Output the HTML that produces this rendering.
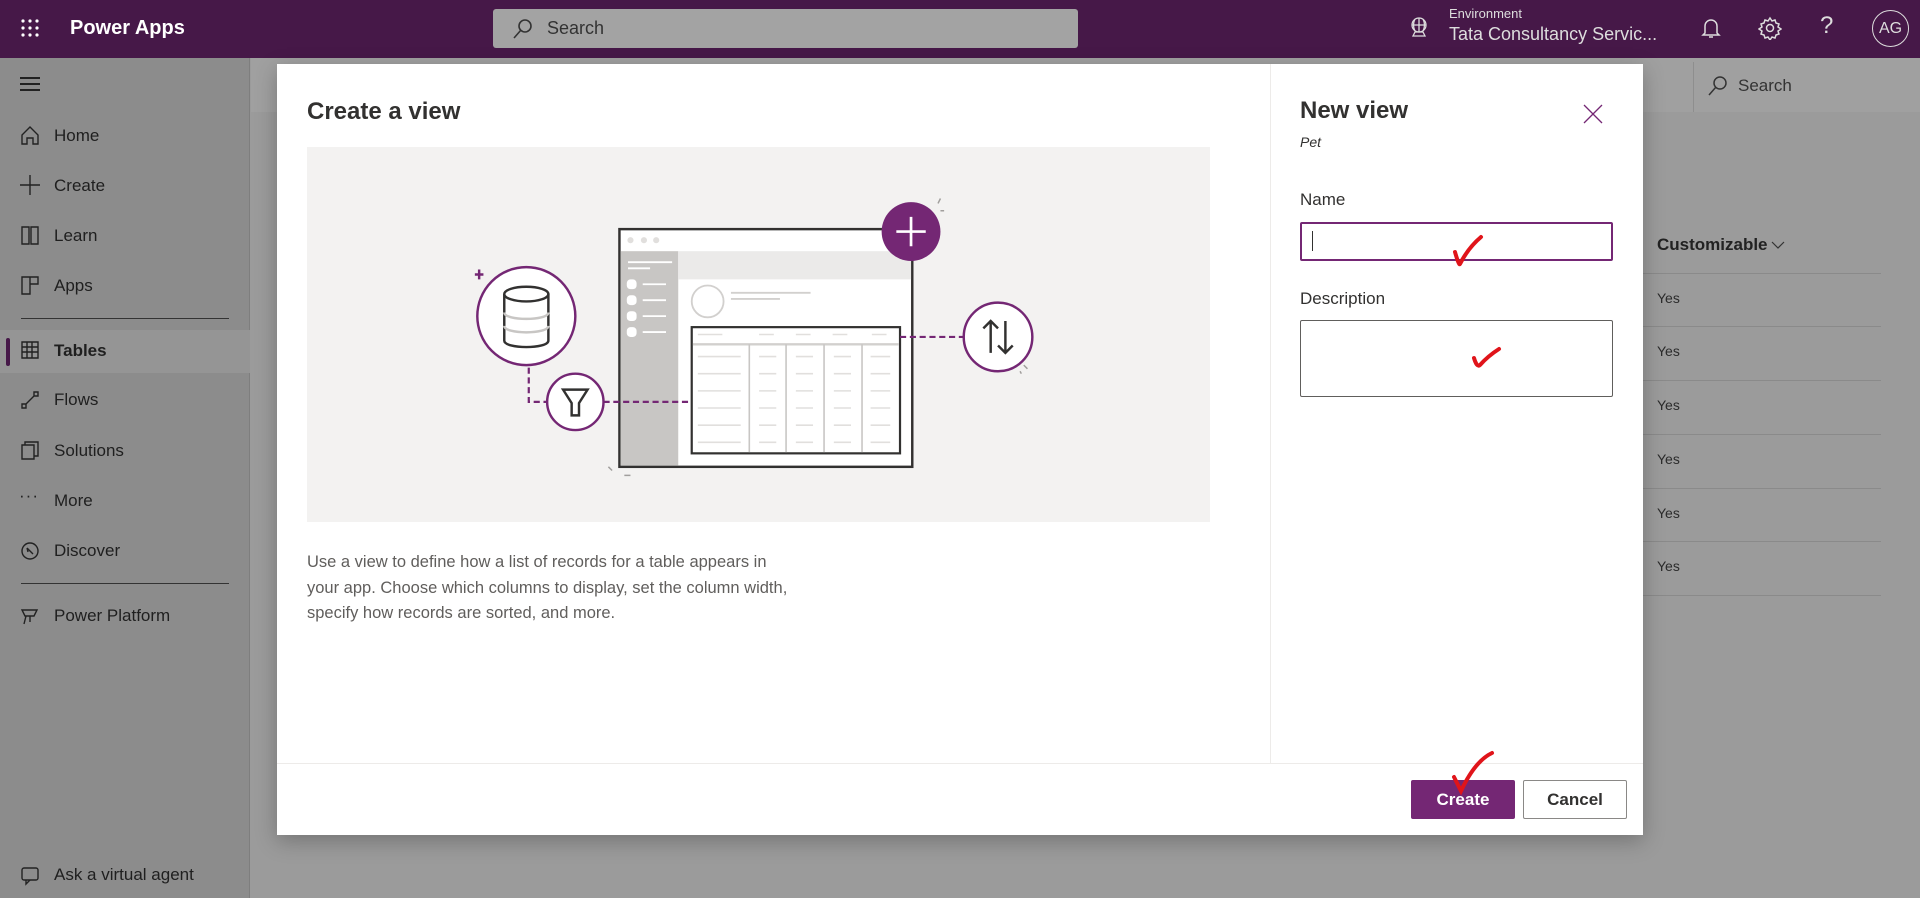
<!DOCTYPE html>
<html><head><meta charset="utf-8"><style>
*{margin:0;padding:0;box-sizing:border-box}
body{width:1920px;height:898px;overflow:hidden;font-family:"Liberation Sans",sans-serif;background:#9b9b9b;position:relative}
.abs{position:absolute}
.top{left:0;top:0;width:1920px;height:58px;background:#461848;color:#fff}
.side{left:0;top:58px;width:250px;height:840px;background:#8c8c8c;border-right:1px solid #7e7e7e}
.nav{position:absolute;left:54px;font-size:17px;color:#1f1f1f}
.ic{position:absolute;left:20px}
.yes{position:absolute;left:1657px;font-size:14px;color:#2b2b2b}
.rl{position:absolute;left:1643px;width:238px;height:1px;background:#8a8a8a}
</style></head><body>
<div class="abs top">
 <svg class="abs" style="left:20px;top:18px" width="20" height="20" viewBox="0 0 20 20" fill="#fff"><circle cx="3" cy="3" r="1.6"/><circle cx="10" cy="3" r="1.6"/><circle cx="17" cy="3" r="1.6"/><circle cx="3" cy="10" r="1.6"/><circle cx="10" cy="10" r="1.6"/><circle cx="17" cy="10" r="1.6"/><circle cx="3" cy="17" r="1.6"/><circle cx="10" cy="17" r="1.6"/><circle cx="17" cy="17" r="1.6"/></svg>
 <div class="abs" style="left:70px;top:17px;font-size:20px;font-weight:bold">Power Apps</div>
 <div class="abs" style="left:493px;top:9px;width:585px;height:39px;background:#a3a3a3;border-radius:3px"></div>
 <svg class="abs" style="left:512px;top:18px" width="22" height="22" viewBox="0 0 22 22" fill="none" stroke="#333" stroke-width="1.6"><circle cx="13" cy="8" r="6"/><path d="M9 12 L2 20"/></svg>
 <div class="abs" style="left:547px;top:18px;font-size:18px;color:#333">Search</div>
 <svg class="abs" style="left:1408px;top:16px" width="22" height="22" viewBox="0 0 22 22" fill="none" stroke="#ddd" stroke-width="1.3"><circle cx="11" cy="9" r="7"/><path d="M4 9h14M11 2v14M7 3c-2 4-2 8 0 12M15 3c2 4 2 8 0 12M5 20h12l-2-4H7z"/></svg>
 <div class="abs" style="left:1449px;top:6px;font-size:13px;color:#ddd">Environment</div>
 <div class="abs" style="left:1449px;top:24px;font-size:18px;color:#ddd">Tata Consultancy Servic...</div>
 <svg class="abs" style="left:1700px;top:16px" width="22" height="24" viewBox="0 0 22 24" fill="none" stroke="#ddd" stroke-width="1.5"><path d="M5 17V10a6 6 0 0 1 12 0v7l2 2H3z M9 21h4"/></svg>
 <svg class="abs" style="left:1758px;top:16px" width="24" height="24" viewBox="0 0 24 24" fill="none" stroke="#ddd" stroke-width="1.5"><circle cx="12" cy="12" r="3.5"/><path d="M12 2l2 3 3-1 1 3 3 1-1 3 3 2-3 2 1 3-3 1-1 3-3-1-2 3-2-3-3 1-1-3-3-1 1-3-3-2 3-2-1-3 3-1 1-3 3 1z"/></svg>
 <div class="abs" style="left:1820px;top:12px;font-size:24px;color:#ddd">?</div>
 <div class="abs" style="left:1872px;top:10px;width:37px;height:37px;border:1px solid #ddd;border-radius:50%;font-size:16px;color:#ddd;text-align:center;line-height:35px">AG</div>
</div>
<div class="abs side">
 <div class="abs" style="left:20px;top:19px;width:20px;height:2px;background:#222;box-shadow:0 6px 0 #222,0 12px 0 #222"></div>
 <div class="abs" style="left:21px;top:260px;width:208px;height:1px;background:#333"></div>
 <div class="abs" style="left:0;top:272px;width:250px;height:43px;background:#959595"></div>
 <div class="abs" style="left:6px;top:280px;width:4px;height:28px;background:#461848;border-radius:2px"></div>
 <div class="nav" style="top:68px">Home</div>
 <div class="nav" style="top:118px">Create</div>
 <div class="nav" style="top:168px">Learn</div>
 <div class="nav" style="top:218px">Apps</div>
 <div class="nav" style="top:283px;font-weight:bold">Tables</div>
 <div class="nav" style="top:332px">Flows</div>
 <div class="nav" style="top:383px">Solutions</div>
 <div class="nav" style="top:433px">More</div>
 <div class="nav" style="top:483px">Discover</div>
 <div class="abs" style="left:21px;top:525px;width:208px;height:1px;background:#333"></div>
 <div class="nav" style="top:548px">Power Platform</div>
 <div class="nav" style="top:807px">Ask a virtual agent</div>
 <svg class="ic" style="top:67px" width="22" height="22" fill="none" stroke="#222" stroke-width="1.4"><path d="M2 10 L10 2 L18 10 V19 H13 V13 H7 V19 H2Z"/></svg>
 <svg class="ic" style="top:117px" width="22" height="22" fill="none" stroke="#222" stroke-width="1.4"><path d="M10 0 V20 M0 10 H20"/></svg>
 <svg class="ic" style="top:167px" width="22" height="22" fill="none" stroke="#222" stroke-width="1.4"><path d="M2 2 h7 v17 h-7z M11 2 h7 v17 h-7z"/></svg>
 <svg class="ic" style="top:217px" width="22" height="22" fill="none" stroke="#222" stroke-width="1.4"><path d="M2 2 h16 v7 h-8 v10 h-8z M10 2 v7"/></svg>
 <svg class="ic" style="top:282px" width="22" height="22" fill="none" stroke="#222" stroke-width="1.4"><path d="M2 2 h16 v16 h-16z M2 7h16M2 12h16M7 2v16M12 2v16"/></svg>
 <svg class="ic" style="top:331px" width="22" height="22" fill="none" stroke="#222" stroke-width="1.4"><path d="M2 19 h4 v-4 h-4z M6 15 L14 7 M14 3 h4 v4 h-4z"/></svg>
 <svg class="ic" style="top:381px" width="22" height="22" fill="none" stroke="#222" stroke-width="1.4"><path d="M2 6 h12 v14 h-12z M5 6 v-3 h13 v14 h-4"/></svg>
 <div class="abs" style="left:19px;top:428px;font-size:17px;color:#222;letter-spacing:1px">···</div>
 <svg class="ic" style="top:483px" width="22" height="22" fill="none" stroke="#222" stroke-width="1.4"><circle cx="10" cy="10" r="8"/><path d="M7 7 l6 6 M7 7 l1 4"/></svg>
 <svg class="ic" style="top:548px" width="22" height="22" fill="none" stroke="#222" stroke-width="1.4"><path d="M2 4 h15 l-3 6 h-9z M6 10 l-2 8 M10 10 v6"/></svg>
 <svg class="ic" style="top:807px" width="22" height="22" fill="none" stroke="#222" stroke-width="1.4"><rect x="2" y="3" width="16" height="12" rx="2"/><path d="M6 15 v4 l4 -4"/></svg>
</div>
<div class="abs" style="left:251px;top:58px;width:1669px;height:54px;background:#a0a0a0"></div>
<div class="abs" style="left:1693px;top:62px;width:1px;height:50px;background:#8e8e8e"></div>
<svg class="abs" style="left:1707px;top:75px" width="22" height="22" fill="none" stroke="#333" stroke-width="1.5"><circle cx="13" cy="8" r="6"/><path d="M9 12 L2 20"/></svg>
<div class="abs" style="left:1738px;top:76px;font-size:17px;color:#333">Search</div>
<div class="abs" style="left:1657px;top:235px;font-size:17px;font-weight:bold;color:#222">Customizable</div>
<svg class="abs" style="left:1771px;top:240px" width="14" height="10" fill="none" stroke="#333" stroke-width="1.2"><path d="M1 2l6 6 6-6"/></svg>
<div class="rl" style="top:273px"></div><div class="rl" style="top:326px"></div><div class="rl" style="top:380px"></div><div class="rl" style="top:434px"></div><div class="rl" style="top:488px"></div><div class="rl" style="top:541px"></div><div class="rl" style="top:595px"></div>
<div class="yes" style="top:290px">Yes</div><div class="yes" style="top:343px">Yes</div><div class="yes" style="top:397px">Yes</div><div class="yes" style="top:451px">Yes</div><div class="yes" style="top:505px">Yes</div><div class="yes" style="top:558px">Yes</div>
<div class="abs" style="left:277px;top:64px;width:1366px;height:771px;background:#fff;box-shadow:0 6px 20px rgba(0,0,0,.25)">
 <div class="abs" style="left:993px;top:0;width:1px;height:699px;background:#edebe9"></div>
 <div class="abs" style="left:0;top:699px;width:1366px;height:1px;background:#edebe9"></div>
 <div class="abs" style="left:30px;top:34px;font-size:24px;font-weight:bold;color:#323130">Create a view</div>
 <div class="abs" style="left:30px;top:83px;width:903px;height:375px;background:#f3f2f1">
  <svg width="903" height="375" viewBox="251 120 737 306" fill="none">
   <rect x="506" y="187" width="239" height="194" fill="#fff" stroke="#323130" stroke-width="2"/>
   <circle cx="515" cy="196" r="2.5" fill="#e1dfdd"/><circle cx="526" cy="196" r="2.5" fill="#e1dfdd"/><circle cx="536" cy="196" r="2.5" fill="#e1dfdd"/>
   <rect x="507" y="205" width="47" height="175" fill="#c8c6c4"/>
   <rect x="554" y="205" width="190" height="23" fill="#ebeae9"/>
   <path d="M513 214h36M513 219h18" stroke="#fff" stroke-width="1.5"/>
   <g fill="#fff"><rect x="512" y="228" width="8" height="8" rx="3"/><rect x="512" y="241" width="8" height="8" rx="3"/><rect x="512" y="254" width="8" height="8" rx="3"/><rect x="512" y="267" width="8" height="8" rx="3"/></g>
   <path d="M525 232h19M525 245h19M525 258h19M525 271h19" stroke="#fff" stroke-width="1.5"/>
   <circle cx="578" cy="246" r="13" stroke="#d2d0ce" stroke-width="1.5"/>
   <path d="M597 239h65M597 244h40" stroke="#d2d0ce" stroke-width="1.5"/>
   <rect x="565" y="267" width="170" height="103" fill="#fff" stroke="#323130" stroke-width="1.8"/>
   <path d="M566 281h168" stroke="#d2d0ce" stroke-width="2"/>
   <path d="M612 281v88M642 281v88M673 281v88M704 281v88" stroke="#c8c6c4" stroke-width="1.3"/>
   <path d="M570 273h20M620 273h12M650 273h12M680 273h12M712 273h12M570 291h35M620 291h14M650 291h14M681 291h14M711 291h16M570 305h35M620 305h14M650 305h14M681 305h14M711 305h16M570 319h35M620 319h14M650 319h14M681 319h14M711 319h16M570 333h35M620 333h14M650 333h14M681 333h14M711 333h16M570 347h35M620 347h14M650 347h14M681 347h14M711 347h16M570 361h35M620 361h14M650 361h14M681 361h14M711 361h16" stroke="#e1dfdd" stroke-width="1.3"/>
   <path d="M432 300v28h15M493 328h72M735 275h52" stroke="#742774" stroke-width="1.8" stroke-dasharray="5 3"/>
   <circle cx="744" cy="189" r="24" fill="#742774"/>
   <path d="M744 177v24M732 189h24" stroke="#fff" stroke-width="2.2"/>
   <circle cx="430" cy="258" r="40" fill="#fff" stroke="#742774" stroke-width="2"/>
   <path d="M412 240v38c0 7 36 7 36 0v-38" stroke="#323130" stroke-width="2"/>
   <ellipse cx="430" cy="240" rx="18" ry="6" stroke="#323130" stroke-width="2"/>
   <path d="M412 255c0 7 36 7 36 0M412 266c0 7 36 7 36 0" stroke="#c8c6c4" stroke-width="2"/>
   <circle cx="470" cy="328" r="23" fill="#fff" stroke="#742774" stroke-width="2"/>
   <path d="M460 318h20l-7 11v10h-6v-10z" stroke="#323130" stroke-width="2"/>
   <circle cx="815" cy="275" r="28" fill="#fff" stroke="#742774" stroke-width="2"/>
   <path d="M809 262v26M803 268l6-6 6 6M821 288v-26M815 282l6 6 6-6" stroke="#323130" stroke-width="2"/>
   <path d="M388 224h7M391.5 220v8" stroke="#742774" stroke-width="2"/>
   <path d="M766 166l2-4M768 172h3M836 298l3 3M833 303l1 2M497 381l3 3M510 388h5" stroke="#a19f9d" stroke-width="1.2"/>
  </svg>
 </div>
 <div class="abs" style="left:30px;top:486px;width:482px;font-size:16.5px;line-height:25.5px;color:#605e5c">Use a view to define how a list of records for a table appears in your app. Choose which columns to display, set the column width, specify how records are sorted, and more.</div>
 <div class="abs" style="left:1023px;top:33px;font-size:24px;font-weight:bold;color:#323130">New view</div>
 <div class="abs" style="left:1023px;top:70px;font-size:14px;font-style:italic;color:#323130">Pet</div>
 <svg class="abs" style="left:1306px;top:40px" width="20" height="20" stroke="#742774" stroke-width="1.3"><path d="M1 1l18 18M19 1L1 19"/></svg>
 <div class="abs" style="left:1023px;top:126px;font-size:17px;color:#323130">Name</div>
 <div class="abs" style="left:1023px;top:158px;width:313px;height:39px;border:2px solid #742774;border-radius:2px"></div>
 <div class="abs" style="left:1035px;top:167px;width:1px;height:20px;background:#323130"></div>
 <div class="abs" style="left:1023px;top:225px;font-size:17px;color:#323130">Description</div>
 <div class="abs" style="left:1023px;top:256px;width:313px;height:77px;border:1px solid #605e5c;border-radius:2px"></div>
 <div class="abs" style="left:1134px;top:716px;width:104px;height:39px;background:#742774;border-radius:2px;color:#fff;font-size:17px;font-weight:bold;text-align:center;line-height:39px">Create</div>
 <div class="abs" style="left:1246px;top:716px;width:104px;height:39px;border:1px solid #8a8886;border-radius:2px;color:#323130;font-size:17px;font-weight:bold;text-align:center;line-height:37px">Cancel</div>
 <svg class="abs" style="left:0;top:0" width="1366" height="771" fill="none" stroke="#e0141a" stroke-width="4" stroke-linecap="round">
  <path d="M1178 188 q4 14 5 12 q8 -16 21 -27"/>
  <path d="M1197 294 q3 10 6 7 q8 -9 19 -16"/>
  <path d="M1177 713 q6 12 7 14 q14 -30 31 -38"/>
 </svg>
</div>
</body></html>
